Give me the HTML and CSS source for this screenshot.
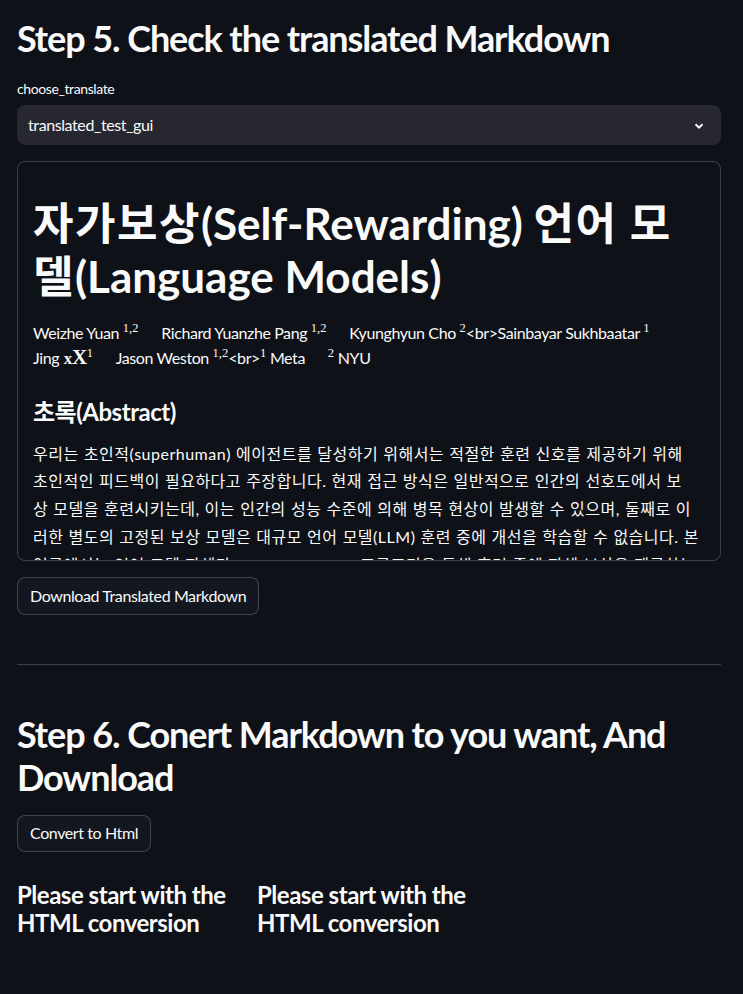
FILE: index.html
```html
<!DOCTYPE html>
<html lang="ko">
<head>
<meta charset="utf-8">
<link rel="stylesheet" href="styles.css">
</head>
<body>
<main class="page">
  <h2 class="h2 first">Step 5. Check the translated Markdown</h2>
  <div class="field">
    <label class="label">choose_translate</label>
    <div class="select">
      <span>translated_test_gui</span>
      <svg class="chev" width="12" height="12" viewBox="0 0 12 12"><path d="M2.5 4.2 L6 7.7 L9.5 4.2" fill="none" stroke="#fafafa" stroke-width="2"/></svg>
    </div>
  </div>
  <div class="mdbox">
    <h1 class="h1"><span class="ko">자가보상</span>(Self-Rewarding) <span class="ko">언어 모</span><br><span class="ko">델</span>(Language Models)</h1>
    <p class="authors">Weizhe Yuan <sup class="m">1,2</sup>&ensp;&ensp;&ensp;Richard Yuanzhe Pang <sup class="m">1,2</sup>&ensp;&ensp;&ensp;Kyunghyun Cho <sup class="m">2</sup>&lt;br&gt;Sainbayar Sukhbaatar <sup class="m">1</sup><br>Jing <span class="mx">x</span><span class="mX">X</span><sup class="m">1</sup>&ensp;&ensp;&ensp;Jason Weston <sup class="m">1,2</sup>&lt;br&gt;<sup class="m">1</sup> Meta&ensp;&ensp;&ensp;<sup class="m">2</sup> NYU</p>
    <h3 class="h3">초록(Abstract)</h3>
    <p class="abs">우리는 초인적(superhuman) 에이전트를 달성하기 위해서는 적절한 훈련 신호를 제공하기 위해<br>초인적인 피드백이 필요하다고 주장합니다. 현재 접근 방식은 일반적으로 인간의 선호도에서 보<br>상 모델을 훈련시키는데, 이는 인간의 성능 수준에 의해 병목 현상이 발생할 수 있으며, 둘째로 이<br>러한 별도의 고정된 보상 모델은 대규모 언어 모델(LLM) 훈련 중에 개선을 학습할 수 없습니다. 본<br>연구에서는 언어 모델 자체가 LLM-as-a-Judge 프롬프팅을 통해 훈련 중에 자체 보상을 제공하는<br>자가보상 언어 모델을 연구합니다.</p>
  </div>
  <button class="btn dl">Download Translated Markdown</button>
  <hr class="rule">
  <h2 class="h2">Step 6. Conert Markdown to you want, And Download</h2>
  <button class="btn cv">Convert to Html</button>
  <div class="cols">
    <h3 class="h3 col">Please start with the HTML conversion</h3>
    <h3 class="h3 col">Please start with the HTML conversion</h3>
    <div class="col"></div>
  </div>
</main>
</body>
</html>
```
FILE: styles.css
```css
* { box-sizing: border-box; }
html, body {
  margin: 0;
  padding: 0;
  background: #0e1117;
  color: #fafafa;
  font-family: Lato, "Noto Sans CJK KR", sans-serif;
  font-size: 16px;
  line-height: 1.6;
  letter-spacing: -0.025em;
}
.page {
  padding: 0 22px 0 17px;
  display: flex;
  flex-direction: column;
}
.h2 {
  font-size: 36px;
  font-weight: 700;
  line-height: 1.2;
  margin: 0;
  padding: 16px 0 16px;
  letter-spacing: -0.03em;
}
.h2.first { padding-top: 17px; }
.field { margin-top: 3px; }
.label {
  display: block;
  font-size: 14px;
  line-height: 20px;
  height: 26px;
}
.select {
  height: 40px;
  background: #262730;
  border-radius: 8px;
  display: flex;
  align-items: center;
  justify-content: space-between;
  padding: 0 16px 0 11px;
  font-size: 16px;
}
.chev { margin-top: 1px; }
.mdbox {
  margin-top: 16px;
  height: 400px;
  border: 1px solid rgba(250, 250, 250, 0.2);
  border-radius: 8px;
  padding: 0 15px;
  overflow: hidden;
}
.h1 {
  font-size: 44px;
  font-weight: 700;
  line-height: 1.2;
  margin: 0;
  padding: 35px 0 17px;
  letter-spacing: 0;
}
.ko { letter-spacing: 1.5px; }
.authors {
  margin: 0 0 16px;
  line-height: 25px;
  font-size: 16px;
}
.m {
  font-family: "Liberation Serif", "DejaVu Serif", serif;
  font-size: 12.5px;
  letter-spacing: 0;
  vertical-align: 0;
  position: relative;
  top: -7px;
  line-height: 0;
}
.mx {
  font-family: "Liberation Serif", serif;
  font-weight: 700;
  font-size: 17px;
  margin-left: 1px;
}
.mX {
  font-family: "Liberation Serif", serif;
  font-weight: 700;
  font-size: 21px;
  line-height: 0;
}
.h3 {
  font-size: 24px;
  font-weight: 700;
  line-height: 1.2;
  margin: 0;
  padding: 11px 0 13px;
  letter-spacing: -0.02em;
}
.abs {
  margin: 0;
  line-height: 27.8px;
  letter-spacing: 0.5px;
  word-spacing: 0.5px;
  white-space: nowrap;
}
.btn {
  align-self: flex-start;
  font-family: inherit;
  letter-spacing: inherit;
  color: #fafafa;
  background: #13171f;
  border: 1px solid rgba(250, 250, 250, 0.2);
  border-radius: 8px;
  font-size: 16px;
  line-height: 1.6;
  padding: 4px 12px;
  height: 38px;
}
.dl { margin-top: 16px; }
.rule {
  width: 100%;
  border: none;
  border-top: 1px solid rgba(250, 250, 250, 0.2);
  margin: 49px 0 32px;
}
.cv { height: 37px; margin-top: -1px; }
.cols {
  display: grid;
  grid-template-columns: repeat(3, 1fr);
  gap: 16px;
  margin-top: 17px;
}
.h3.col {
  padding: 12px 0 16px;
}
```
